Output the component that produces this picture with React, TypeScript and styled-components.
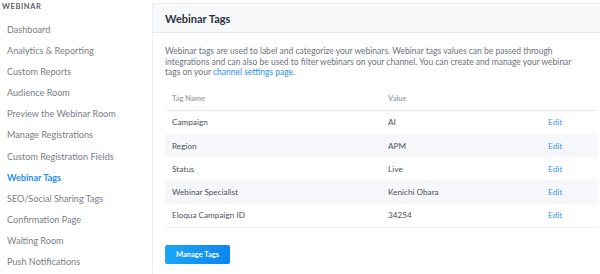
import React from "react";
import styled, { createGlobalStyle } from "styled-components";

const GlobalStyle = createGlobalStyle`
  html, body {
    margin: 0;
    padding: 0;
    background: #ffffff;
    font-family: Lato, "Noto Sans", sans-serif;
  }
`;

const navItems = [
  "Dashboard",
  "Analytics & Reporting",
  "Custom Reports",
  "Audience Room",
  "Preview the Webinar Room",
  "Manage Registrations",
  "Custom Registration Fields",
  "Webinar Tags",
  "SEO/Social Sharing Tags",
  "Confirmation Page",
  "Waiting Room",
  "Push Notifications",
];

const tags = [
  { name: "Campaign", value: "AI" },
  { name: "Region", value: "APM" },
  { name: "Status", value: "Live" },
  { name: "Webinar Specialist", value: "Kenichi Obara" },
  { name: "Eloqua Campaign ID", value: "34254" },
];

const Page = styled.div`
  display: flex;
  width: 600px;
  height: 274px;
  overflow: hidden;
`;

const Sidebar = styled.nav`
  width: 152px;
  flex-shrink: 0;
  display: flex;
  flex-direction: column;
`;

const SectionLabel = styled.div`
  height: 14px;
  line-height: 14px;
  padding-left: 2px;
  margin-bottom: 5px;
  font-size: 7.5px;
  font-weight: 700;
  letter-spacing: 0.6px;
  color: #5c6170;
`;

const NavItem = styled.a<{ $active?: boolean }>`
  display: block;
  height: 21.1px;
  line-height: 21px;
  padding-left: 7px;
  font-size: 9.1px;
  white-space: nowrap;
  text-decoration: none;
  color: ${(p) => (p.$active ? "#1e8ff0" : "#7a7e89")};
  font-weight: ${(p) => (p.$active ? 700 : 400)};
`;

const Panel = styled.section`
  flex: 1;
  margin-top: 3px;
  border-left: 1px solid #eceef2;
  display: flex;
  flex-direction: column;
`;

const PanelHeader = styled.header`
  height: 28px;
  display: flex;
  align-items: center;
  padding-left: 12px;
  background: #f8f9fb;
  border-top: 1px solid #eef0f3;
  border-bottom: 1px solid #e8eaee;
`;

const Title = styled.h2`
  margin: 0;
  font-size: 11px;
  font-weight: 700;
  color: #2f3341;
`;

const PanelBody = styled.div`
  padding: 13px 2px 0 12px;
`;

const Description = styled.p`
  margin: 0;
  width: 418px;
  font-size: 8.5px;
  line-height: 10.6px;
  color: #6e727d;
`;

const Link = styled.a`
  color: #2b8ef0;
  text-decoration: none;
`;

const Table = styled.div`
  margin-top: 10px;
  border-bottom: 1px solid #eceef2;
`;

const Row = styled.div<{ $striped?: boolean; $head?: boolean }>`
  display: grid;
  grid-template-columns: 216px 160px 1fr;
  align-items: center;
  height: ${(p) => (p.$head ? "22px" : "23.2px")};
  background: ${(p) => (p.$striped ? "#f6f7fa" : "transparent")};
  border-bottom: ${(p) => (p.$head ? "1px solid #eaecf0" : "none")};
`;

const HeadCell = styled.div`
  padding-left: 7px;
  font-size: 7.5px;
  font-weight: 700;
  color: #a3a7b1;
`;

const Cell = styled.div`
  padding-left: 7px;
  font-size: 8.2px;
  color: #4e525d;
`;

const EditLink = styled.a`
  padding-left: 7px;
  font-size: 8.4px;
  color: #3a97f2;
  text-decoration: none;
`;

const ManageButton = styled.button`
  margin-top: 17px;
  width: 65px;
  height: 19px;
  border: none;
  border-radius: 2px;
  background: linear-gradient(90deg, #1ba6f7, #0c86f0);
  color: #ffffff;
  font-family: Lato, "Noto Sans", sans-serif;
  font-size: 7.5px;
  font-weight: 700;
  padding: 0;
  cursor: pointer;
`;

export default function App() {
  return (
    <Page>
      <GlobalStyle />
      <Sidebar>
        <SectionLabel>WEBINAR</SectionLabel>
        {navItems.map((item) => (
          <NavItem key={item} $active={item === "Webinar Tags"}>
            {item}
          </NavItem>
        ))}
      </Sidebar>
      <Panel>
        <PanelHeader>
          <Title>Webinar Tags</Title>
        </PanelHeader>
        <PanelBody>
          <Description>
            Webinar tags are used to label and categorize your webinars. Webinar tags values can be passed through
            integrations and can also be used to filter webinars on your channel. You can create and manage your webinar
            tags on your <Link>channel settings page</Link>.
          </Description>
          <Table>
            <Row $head>
              <HeadCell>Tag Name</HeadCell>
              <HeadCell>Value</HeadCell>
              <HeadCell />
            </Row>
            {tags.map((tag, idx) => (
              <Row key={tag.name} $striped={idx % 2 === 1}>
                <Cell>{tag.name}</Cell>
                <Cell>{tag.value}</Cell>
                <EditLink>Edit</EditLink>
              </Row>
            ))}
          </Table>
          <ManageButton>Manage Tags</ManageButton>
        </PanelBody>
      </Panel>
    </Page>
  );
}
